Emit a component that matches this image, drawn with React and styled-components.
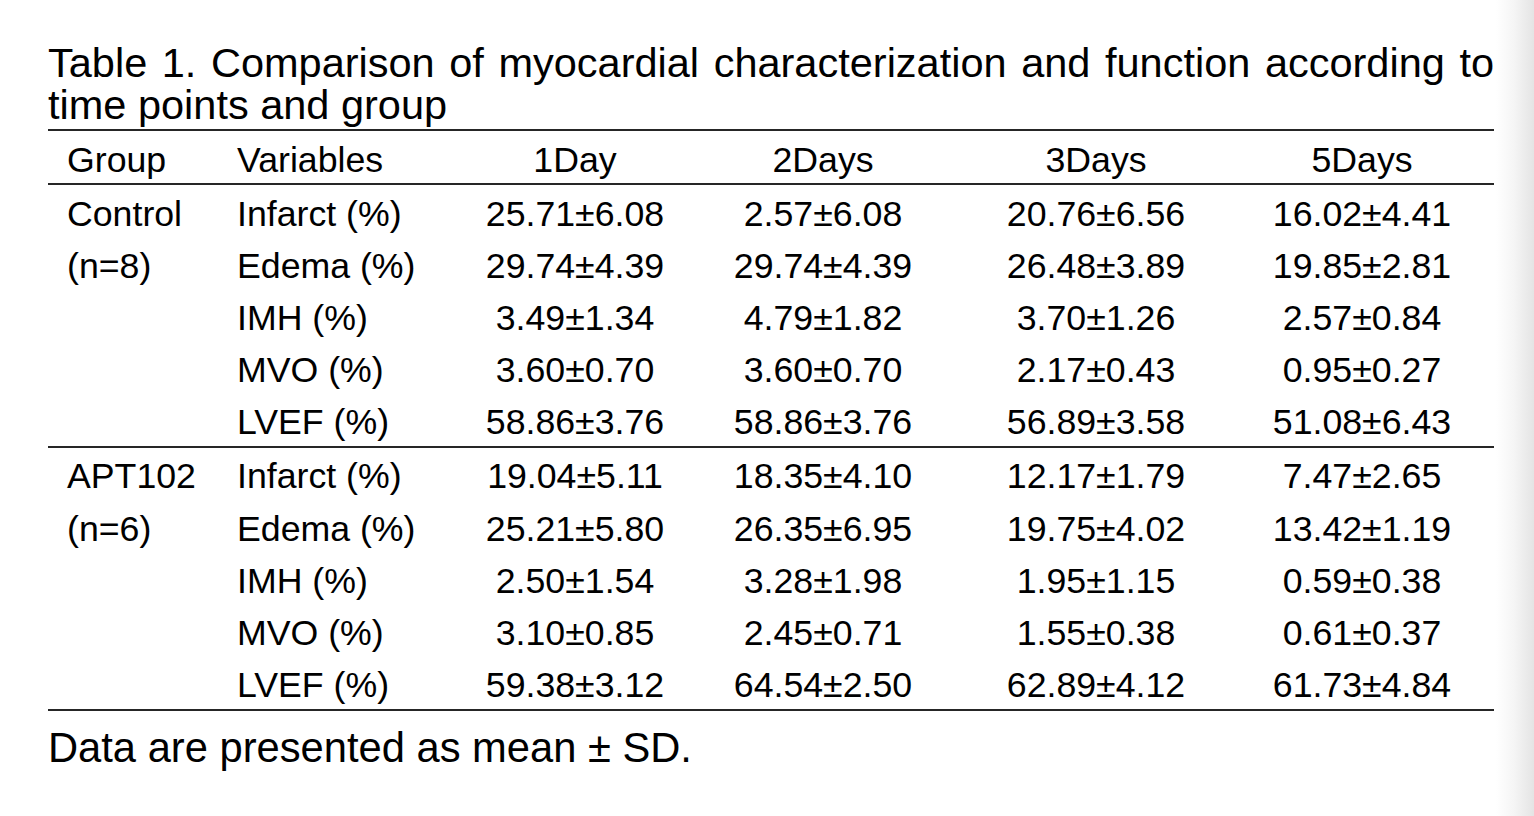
import React from "react";
import styled, { createGlobalStyle } from "styled-components";

const GlobalStyle = createGlobalStyle`
  html, body {
    margin: 0;
    padding: 0;
  }
  body {
    min-height: 816px;
    background: linear-gradient(to right, #ffffff 0, #ffffff 1496px, #f5f5f5 1514px, #e4e4e4 1534px);
    font-family: "Liberation Sans", Arial, Helvetica, sans-serif;
    color: #000;
  }
`;

const Page = styled.main`
  width: 1446px;
  padding: 42px 0 0 48px;
`;

const Caption = styled.h1`
  margin: 0;
  font-size: 41.5px;
  font-weight: 400;
  line-height: 42px;
  text-align: justify;
`;

const Table = styled.section`
  margin-top: 3px;
  border-top: 2px solid #262626;
`;

const COLS = "170px 234px 246px 250px 296px 250px";

const HeaderRow = styled.div`
  display: grid;
  grid-template-columns: ${COLS};
  box-sizing: border-box;
  height: 54px;
  padding-top: 4.5px;
  line-height: 48px;
  font-size: 35.7px;
  border-bottom: 2px solid #262626;
`;

const GroupBlock = styled.div`
  border-bottom: 2px solid #262626;
`;

const Row = styled.div`
  display: grid;
  grid-template-columns: ${COLS};
  box-sizing: border-box;
  height: 52.2px;
  padding-top: 5.5px;
  line-height: 46.7px;
  font-size: 35.7px;
`;

const Cell = styled.div`
  white-space: nowrap;
  text-align: ${(p) => (p.$center ? "center" : "left")};
  padding-left: ${(p) => (p.$center ? "0" : "19px")};
  padding-right: ${(p) => (p.$last ? "14px" : "0")};
`;

const Footnote = styled.p`
  margin: 16px 0 0;
  font-size: 41.7px;
  line-height: 42px;
`;

const headers = ["1Day", "2Days", "3Days", "5Days"];

const groups = [
  {
    label: ["Control", "(n=8)"],
    rows: [
      ["Infarct (%)", "25.71±6.08", "2.57±6.08", "20.76±6.56", "16.02±4.41"],
      ["Edema (%)", "29.74±4.39", "29.74±4.39", "26.48±3.89", "19.85±2.81"],
      ["IMH (%)", "3.49±1.34", "4.79±1.82", "3.70±1.26", "2.57±0.84"],
      ["MVO (%)", "3.60±0.70", "3.60±0.70", "2.17±0.43", "0.95±0.27"],
      ["LVEF (%)", "58.86±3.76", "58.86±3.76", "56.89±3.58", "51.08±6.43"],
    ],
  },
  {
    label: ["APT102", "(n=6)"],
    rows: [
      ["Infarct (%)", "19.04±5.11", "18.35±4.10", "12.17±1.79", "7.47±2.65"],
      ["Edema (%)", "25.21±5.80", "26.35±6.95", "19.75±4.02", "13.42±1.19"],
      ["IMH (%)", "2.50±1.54", "3.28±1.98", "1.95±1.15", "0.59±0.38"],
      ["MVO (%)", "3.10±0.85", "2.45±0.71", "1.55±0.38", "0.61±0.37"],
      ["LVEF (%)", "59.38±3.12", "64.54±2.50", "62.89±4.12", "61.73±4.84"],
    ],
  },
];

export default function App() {
  return (
    <>
      <GlobalStyle />
      <Page>
        <Caption>
          Table 1. Comparison of myocardial characterization and function according to time points and group
        </Caption>
        <Table>
          <HeaderRow>
            <Cell>Group</Cell>
            <Cell>Variables</Cell>
            {headers.map((h, i) => (
              <Cell key={h} $center $last={i === headers.length - 1}>
                {h}
              </Cell>
            ))}
          </HeaderRow>
          {groups.map((g) => (
            <GroupBlock key={g.label[0]}>
              {g.rows.map((r, ri) => (
                <Row key={r[0]}>
                  <Cell>{g.label[ri] || ""}</Cell>
                  <Cell>{r[0]}</Cell>
                  {r.slice(1).map((v, vi) => (
                    <Cell key={vi} $center $last={vi === 3}>
                      {v}
                    </Cell>
                  ))}
                </Row>
              ))}
            </GroupBlock>
          ))}
        </Table>
        <Footnote>Data are presented as mean ± SD.</Footnote>
      </Page>
    </>
  );
}
